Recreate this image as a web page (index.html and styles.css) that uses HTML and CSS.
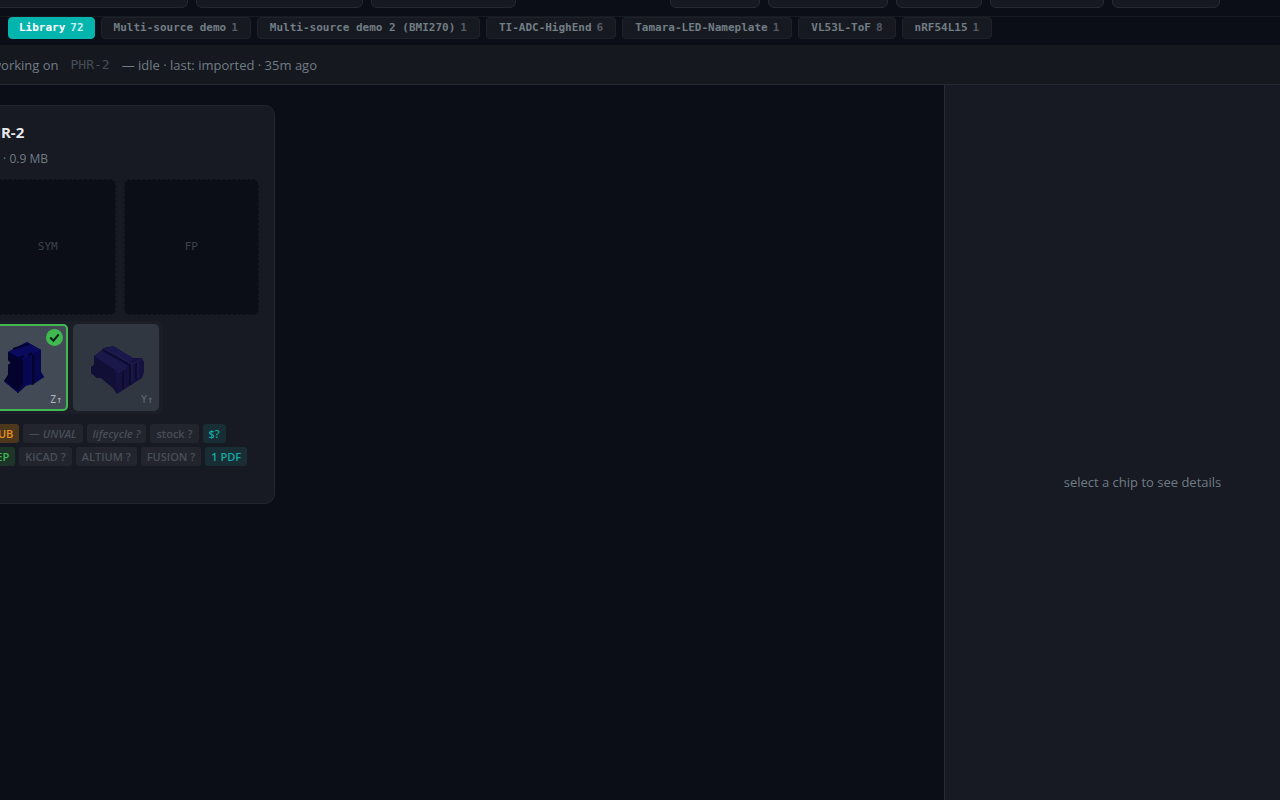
FILE: index.html
```
<!DOCTYPE html>
<html lang="en">
<head>
<meta charset="utf-8">
<title>Chip library</title>
<link rel="stylesheet" href="styles.css">
</head>
<body>
<div class="app">
  <header class="toolbar">
    <div class="filters">
      <input class="ctl search" type="text" aria-label="Search">
      <select class="ctl category" aria-label="Category"></select>
      <select class="ctl sort" aria-label="Sort"></select>
    </div>
    <div class="actions">
      <button class="ctl w-90" aria-label="Import"></button>
      <button class="ctl w-120" aria-label="Export"></button>
      <button class="ctl w-86" aria-label="Refresh"></button>
      <button class="ctl w-114" aria-label="Settings"></button>
      <button class="ctl w-108" aria-label="Help"></button>
    </div>
  </header>

  <nav class="tabs">
    <button class="tab active">Library <span>72</span></button>
    <button class="tab">Multi-source demo <span>1</span></button>
    <button class="tab">Multi-source demo 2 (BMI270) <span>1</span></button>
    <button class="tab">TI-ADC-HighEnd <span>6</span></button>
    <button class="tab">Tamara-LED-Nameplate <span>1</span></button>
    <button class="tab">VL53L-ToF <span>8</span></button>
    <button class="tab">nRF54L15 <span>1</span></button>
  </nav>

  <div class="status">
    <span>working on</span>
    <code>PHR-2</code>
    <span>— idle · last: imported · 35m ago</span>
  </div>

  <div class="content">
    <main class="grid">
      <article class="card">
        <h2>PHR-2</h2>
        <p class="meta">1x2 · 0.9 MB</p>
        <div class="previews">
          <div class="preview">SYM</div>
          <div class="preview">FP</div>
        </div>
        <div class="models">
          <button class="model selected">
            <svg viewBox="0 0 86 86" aria-hidden="true">
              <path fill="#05053f" d="M45 18l14 8v22l3 5-9 6-2 2-5-1-10 9-14-12 4-6V41l3-2-3-3v-8z"/>
              <path fill="#0a0a5e" d="M45 18l14 8-18 10-15-8z"/>
              <path fill="#07074f" d="M41 36l7-4v29l-7 1zM53 30l6-4v22l3 5-9 6z"/>
              <path fill="#03032e" d="M26 28l15 8v26l-5 7-14-12 4-6V41l3-2-3-3z"/>
              <path stroke="#03032c" stroke-width="2" fill="none" d="M51 31v29M38 34l4-2M46 31l4-2M31 25l16-5"/>
              <path stroke="#0b0b66" fill="none" d="M22 57l14 11 5-6 7-2M49 32v28"/>
            </svg>
            <span class="axis">Z↑</span>
            <span class="check"><svg viewBox="0 0 16 16"><path d="M4 8l3 3 5-6"/></svg></span>
          </button>
          <button class="model">
            <svg viewBox="0 0 86 86" aria-hidden="true">
              <path fill="#151240" d="M21 32l8-6 1-2 10-2 20 12h9l2 4v10l-2 6-25 16-4-6-12-10h-4l-6-5v-6l3-2z"/>
              <path fill="#1a174b" d="M21 32l8-5 26 15-10 7zM33 25l7-3 20 12-4 5z"/>
              <path fill="#110f35" d="M21 32l21 14 2 24-4-6-12-10h-4l-6-5v-6l3-2z"/>
              <path stroke="#0e0c2e" stroke-width="2" fill="none" d="M30 26l27 15v20M50 47v18M63 37v19"/>
              <path stroke="#211e55" fill="none" d="M30 24l29 16 10-5M59 40v18M65 38v16M45 49l8-5"/>
            </svg>
            <span class="axis">Y↑</span>
          </button>
        </div>
        <div class="pills">
          <span class="pill orange">? SUB</span>
          <span class="pill"><i>— UNVAL</i></span>
          <span class="pill"><i>lifecycle ?</i></span>
          <span class="pill">stock ?</span>
          <span class="pill teal">$?</span>
        </div>
        <div class="pills">
          <span class="pill green">STEP</span>
          <span class="pill">KICAD ?</span>
          <span class="pill">ALTIUM ?</span>
          <span class="pill">FUSION ?</span>
          <span class="pill teal">1 PDF</span>
        </div>
      </article>
    </main>
    <aside class="details">select a chip to see details</aside>
  </div>
</div>
</body>
</html>
```
FILE: styles.css
```
* {
  box-sizing: border-box;
}
body {
  margin: 0;
  overflow: hidden;
  background: #0b0e16;
  color: #707c85;
  font: 13px/20px "Open Sans", sans-serif;
}
button {
  font: inherit;
  color: inherit;
}
.app {
  display: flex;
  flex-direction: column;
  height: calc(100vh + 78px);
}

/* top bar */
.toolbar {
  display: flex;
  justify-content: space-between;
  padding: 0 60px 8px 0;
  border-bottom: 1px solid #171a21;
}
.filters, .actions {
  display: flex;
  gap: 8px;
}
.ctl {
  appearance: none;
  height: 32px;
  margin-top: -24px;
  padding: 0 8px;
  background: #161920;
  border: 1px solid #262932;
  border-radius: 6px;
}
.search { width: 208px; margin-left: -20px; }
.category { width: 167px; }
.sort { width: 145px; }
.w-90 { width: 90px; }
.w-120 { width: 120px; }
.w-86 { width: 86px; }
.w-114 { width: 114px; }
.w-108 { width: 108px; }

.tabs {
  display: flex;
  gap: 6px;
  padding: 0 8px 6px;
}
.tab {
  display: flex;
  gap: 5px;
  padding: 0 12px;
  background: #161920;
  border: 1px solid #1e222a;
  border-radius: 4px;
  color: #717d85;
  font: bold 11px/20px "DejaVu Sans Mono", monospace;
  white-space: nowrap;
}
.tab span {
  color: #555c65;
}
.tab.active {
  padding: 0 10px;
  background: #04b5ae;
  border-color: #04b5ae;
  color: #fff;
}
.tab.active span {
  color: #c4f0ee;
}

.status {
  display: flex;
  gap: 12px;
  align-items: center;
  height: 40px;
  padding-left: 8px;
  margin-left: -17px;
  background: #15181f;
  border-bottom: 1px solid #272a32;
}
.status code {
  color: #484e57;
  font: 13px/20px "DejaVu Sans Mono", monospace;
}

.content {
  display: flex;
  flex: 1;
}
.grid {
  flex: 1;
  padding: 20px 20px 20px 0;
}

/* chip card */
.card {
  width: 312px;
  margin-left: -37px;
  padding: 16px 15px 33px 16px;
  background: #171a22;
  border: 1px solid #23262f;
  border-radius: 10px;
}
.card h2 {
  margin: 0;
  color: #e6e9ee;
  font-size: 15px;
  line-height: 20px;
}
.meta {
  margin: 7px 0 10px;
  font-size: 12px;
}
.previews {
  display: flex;
  gap: 8px;
}
.preview {
  flex: 1;
  display: flex;
  align-items: center;
  justify-content: center;
  aspect-ratio: 1;
  background: #0b0e16;
  border: 1px dashed #151922;
  border-radius: 6px;
  color: #3c424b;
  font: 11px/16px "DejaVu Sans Mono", monospace;
}
.models {
  display: flex;
  gap: 5px;
  width: 183px;
  margin: 6px 0 10px;
  padding: 3px 3px 3px 2px;
  background: #1b1e27;
  border-radius: 6px;
}
.model {
  position: relative;
  width: 86px;
  height: 87px;
  padding: 0;
  background: #313741;
  border: 0;
  border-radius: 5px;
  color: #656c75;
}
.model > svg {
  display: block;
  width: 100%;
}
.model.selected {
  background: #424a55;
  box-shadow: inset 0 0 0 2px #3fb950;
  color: #b0b5bb;
}
.axis {
  position: absolute;
  right: 6px;
  bottom: 4px;
  font: 10px/14px "DejaVu Sans Mono", monospace;
}
.check {
  position: absolute;
  top: 5px;
  right: 5px;
  width: 17px;
  height: 17px;
  background: #3fb950;
  border-radius: 50%;
}
.check svg {
  display: block;
  fill: none;
  stroke: #10251a;
  stroke-width: 2;
}

.pills {
  display: flex;
  gap: 4px;
  margin: 0 0 4px -2px;
}
.pill {
  padding: 0 6px;
  background: #22252e;
  border-radius: 3px;
  color: #484e58;
  font-size: 11px;
  font-weight: 600;
  line-height: 19px;
  white-space: nowrap;
}
.orange { background: #4b371b; color: #e8921c; }
.green { background: #1c3528; color: #3fb950; }
.teal { background: #182d34; color: #12a9a4; }

.details {
  display: flex;
  align-items: center;
  justify-content: center;
  width: 396px;
  margin-right: -60px;
  background: #171a22;
  border-left: 1px solid #272a32;
}
```
